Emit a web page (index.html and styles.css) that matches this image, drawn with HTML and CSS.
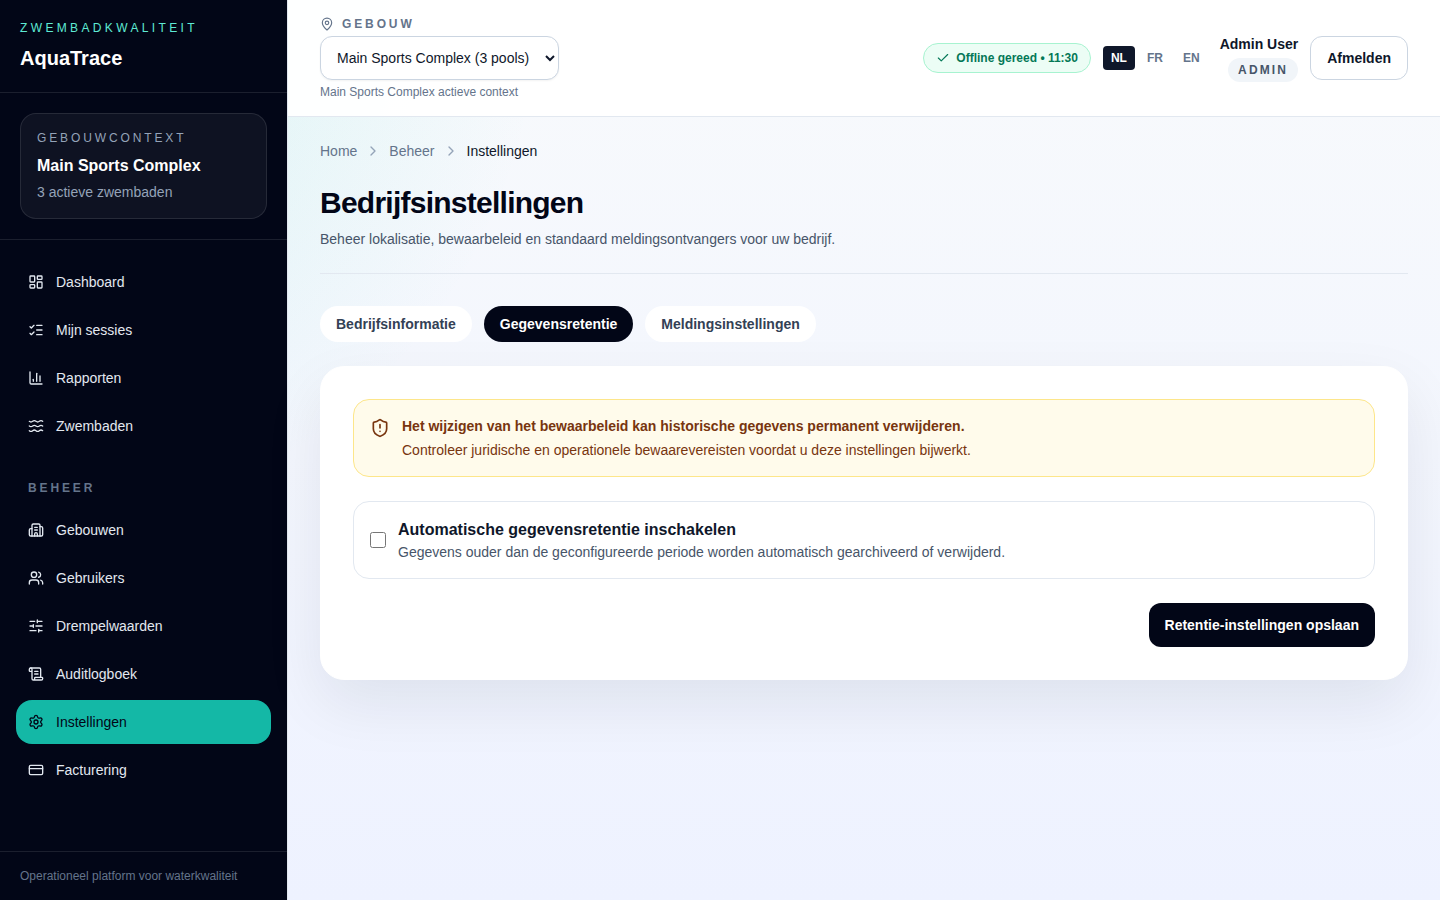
FILE: index.html
```html
<!DOCTYPE html>
<html lang="nl">
<head>
    <meta charset="utf-8">
    <meta name="viewport" content="width=device-width, initial-scale=1">
    <title>Bedrijfsinstellingen - AquaTrace</title>
    <link rel="stylesheet" href="styles.css">
</head>
<body>
<div class="app">
    <aside class="sidebar">
        <div class="brand">
            <p class="brand-label">Zwembadkwaliteit</p>
            <p class="brand-name">AquaTrace</p>
        </div>
        <div class="context">
            <div class="context-card">
                <p class="context-label">Gebouwcontext</p>
                <p class="context-name">Main Sports Complex</p>
                <p class="context-info">3 actieve zwembaden</p>
            </div>
        </div>
        <nav class="nav">
            <div class="nav-group">
                <a class="nav-link" href="#">
                    <svg class="icon" viewBox="0 0 24 24"><rect width="7" height="9" x="3" y="3" rx="1"/><rect width="7" height="5" x="14" y="3" rx="1"/><rect width="7" height="9" x="14" y="12" rx="1"/><rect width="7" height="5" x="3" y="16" rx="1"/></svg>
                    Dashboard
                </a>
                <a class="nav-link" href="#">
                    <svg class="icon" viewBox="0 0 24 24"><path d="M13 5h8"/><path d="M13 12h8"/><path d="M13 19h8"/><path d="m3 17 2 2 4-4"/><path d="m3 7 2 2 4-4"/></svg>
                    Mijn sessies
                </a>
                <a class="nav-link" href="#">
                    <svg class="icon" viewBox="0 0 24 24"><path d="M3 3v16a2 2 0 0 0 2 2h16"/><path d="M18 17V9"/><path d="M13 17V5"/><path d="M8 17v-3"/></svg>
                    Rapporten
                </a>
                <a class="nav-link" href="#">
                    <svg class="icon" viewBox="0 0 24 24"><path d="M2 12q2.5 2 5 0t5 0 5 0 5 0"/><path d="M2 19q2.5 2 5 0t5 0 5 0 5 0"/><path d="M2 5q2.5 2 5 0t5 0 5 0 5 0"/></svg>
                    Zwembaden
                </a>
            </div>
            <div class="nav-group">
                <p class="nav-title">Beheer</p>
                <a class="nav-link" href="#">
                    <svg class="icon" viewBox="0 0 24 24"><path d="M10 12h4"/><path d="M10 8h4"/><path d="M14 21v-3a2 2 0 0 0-4 0v3"/><path d="M6 10H4a2 2 0 0 0-2 2v7a2 2 0 0 0 2 2h16a2 2 0 0 0 2-2V9a2 2 0 0 0-2-2h-2"/><path d="M6 21V5a2 2 0 0 1 2-2h8a2 2 0 0 1 2 2v16"/></svg>
                    Gebouwen
                </a>
                <a class="nav-link" href="#">
                    <svg class="icon" viewBox="0 0 24 24"><path d="M16 21v-2a4 4 0 0 0-4-4H6a4 4 0 0 0-4 4v2"/><path d="M16 3.128a4 4 0 0 1 0 7.744"/><path d="M22 21v-2a4 4 0 0 0-3-3.870"/><circle cx="9" cy="7" r="4"/></svg>
                    Gebruikers
                </a>
                <a class="nav-link" href="#">
                    <svg class="icon" viewBox="0 0 24 24"><path d="M10 5H3"/><path d="M12 19H3"/><path d="M14 3v4"/><path d="M16 17v4"/><path d="M21 12h-9"/><path d="M21 19h-5"/><path d="M21 5h-7"/><path d="M8 10v4"/><path d="M8 12H3"/></svg>
                    Drempelwaarden
                </a>
                <a class="nav-link" href="#">
                    <svg class="icon" viewBox="0 0 24 24"><path d="M15 12h-5"/><path d="M15 8h-5"/><path d="M19 17V5a2 2 0 0 0-2-2H4"/><path d="M8 21h12a2 2 0 0 0 2-2v-1a1 1 0 0 0-1-1H11a1 1 0 0 0-1 1v1a2 2 0 1 1-4 0V5a2 2 0 1 0-4 0v2a1 1 0 0 0 1 1h3"/></svg>
                    Auditlogboek
                </a>
                <a class="nav-link active" href="#" aria-current="page">
                    <svg class="icon" viewBox="0 0 24 24"><path d="M9.671 4.136a2.340 2.340 0 0 1 4.659 0 2.340 2.340 0 0 0 3.319 1.915 2.340 2.340 0 0 1 2.330 4.033 2.340 2.340 0 0 0 0 3.831 2.340 2.340 0 0 1-2.330 4.033 2.340 2.340 0 0 0-3.319 1.915 2.340 2.340 0 0 1-4.659 0 2.340 2.340 0 0 0-3.320-1.915 2.340 2.340 0 0 1-2.330-4.033 2.340 2.340 0 0 0 0-3.831A2.340 2.340 0 0 1 6.350 6.051a2.340 2.340 0 0 0 3.319-1.915"/><circle cx="12" cy="12" r="3"/></svg>
                    Instellingen
                </a>
                <a class="nav-link" href="#">
                    <svg class="icon" viewBox="0 0 24 24"><rect width="20" height="14" x="2" y="5" rx="2"/><path d="M2 10h20"/></svg>
                    Facturering
                </a>
            </div>
        </nav>
        <p class="sidebar-footer">Operationeel platform voor waterkwaliteit</p>
    </aside>

    <div class="content">
        <header class="topbar">
            <div class="building">
                <label class="building-label" for="building">
                    <svg class="icon icon-small" viewBox="0 0 24 24"><path d="M20 10c0 4.993-5.539 10.193-7.399 11.799a1 1 0 0 1-1.202 0C9.539 20.193 4 14.993 4 10a8 8 0 0 1 16 0"/><circle cx="12" cy="10" r="3"/></svg>
                    Gebouw
                </label>
                <select class="building-select" id="building">
                    <option>Main Sports Complex (3 pools)</option>
                </select>
                <p class="building-info">Main Sports Complex actieve context</p>
            </div>
            <div class="topbar-right">
                <div class="status">
                    <svg class="icon icon-small" viewBox="0 0 24 24"><path d="M20 6 9 17l-5-5"/></svg>
                    Offline gereed • 11:30
                </div>
                <div class="languages">
                    <button type="button" class="language active">NL</button>
                    <button type="button" class="language">FR</button>
                    <button type="button" class="language">EN</button>
                </div>
                <div class="user">
                    <span class="user-name">Admin User</span>
                    <span class="user-role">Admin</span>
                </div>
                <button type="button" class="button button-outline">Afmelden</button>
            </div>
        </header>

        <main class="main">
            <nav class="breadcrumb" aria-label="Breadcrumb">
                <a href="#">Home</a>
                <svg class="icon" viewBox="0 0 24 24"><path d="m9 18 6-6-6-6"/></svg>
                <a href="#">Beheer</a>
                <svg class="icon" viewBox="0 0 24 24"><path d="m9 18 6-6-6-6"/></svg>
                <span class="current">Instellingen</span>
            </nav>
            <div class="page-header">
                <h1>Bedrijfsinstellingen</h1>
                <p>Beheer lokalisatie, bewaarbeleid en standaard meldingsontvangers voor uw bedrijf.</p>
            </div>
            <div class="tabs">
                <button type="button" class="tab">Bedrijfsinformatie</button>
                <button type="button" class="tab active">Gegevensretentie</button>
                <button type="button" class="tab">Meldingsinstellingen</button>
            </div>
            <form class="card">
                <div class="alert">
                    <svg class="icon alert-icon" viewBox="0 0 24 24"><path d="M20 13c0 5-3.500 7.500-7.660 8.950a1 1 0 0 1-.67-.01C7.500 20.500 4 18 4 13V6a1 1 0 0 1 1-1c2 0 4.500-1.200 6.240-2.720a1.170 1.170 0 0 1 1.520 0C14.510 3.810 17 5 19 5a1 1 0 0 1 1 1z"/><path d="M12 8v4"/><path d="M12 16h.01"/></svg>
                    <div class="alert-text">
                        <strong>Het wijzigen van het bewaarbeleid kan historische gegevens permanent verwijderen.</strong>
                        <p>Controleer juridische en operationele bewaarevereisten voordat u deze instellingen bijwerkt.</p>
                    </div>
                </div>
                <label class="option" for="retention">
                    <input type="checkbox" id="retention">
                    <span class="option-text">
                        <span class="option-title">Automatische gegevensretentie inschakelen</span>
                        <span class="option-info">Gegevens ouder dan de geconfigureerde periode worden automatisch gearchiveerd of verwijderd.</span>
                    </span>
                </label>
                <div class="actions">
                    <button type="submit" class="button button-dark">Retentie-instellingen opslaan</button>
                </div>
            </form>
        </main>
    </div>
</div>
</body>
</html>
```

FILE: styles.css
```css
* {
    box-sizing: border-box;
}
body {
    margin: 0;
    font-family: "Liberation Sans", Arial, sans-serif;
    font-size: 14px;
    line-height: 20px;
    color: #0f172a;
    background: radial-gradient(circle at top left, rgba(45, 212, 191, 0.18), transparent 32%),
                linear-gradient(180deg, #f8fafc 0%, #eef2ff 100%);
}
p, h1 {
    margin: 0;
}
a {
    color: inherit;
    text-decoration: none;
}
button, select, input {
    font: inherit;
}
button {
    border: none;
    cursor: pointer;
}
.icon {
    width: 16px;
    height: 16px;
    flex-shrink: 0;
    fill: none;
    stroke: currentColor;
    stroke-width: 2;
    stroke-linecap: round;
    stroke-linejoin: round;
}
.icon-small {
    width: 14px;
    height: 14px;
}
.app {
    display: flex;
    min-height: 100vh;
}

/* Sidebar */
.sidebar {
    display: flex;
    flex-direction: column;
    flex-shrink: 0;
    width: 288px;
    border-right: 1px solid #e2e8f0;
    background-color: #020617;
    color: #e2e8f0;
}
.brand {
    padding: 20px;
    border-bottom: 1px solid rgba(255, 255, 255, 0.1);
}
.brand-label {
    font-size: 12px;
    line-height: 16px;
    letter-spacing: 0.28em;
    text-transform: uppercase;
    color: #5eead4;
}
.brand-name {
    margin-top: 8px;
    font-size: 20px;
    line-height: 28px;
    font-weight: bold;
    color: #fff;
}
.context {
    padding: 20px;
    border-bottom: 1px solid rgba(255, 255, 255, 0.1);
}
.context-card {
    padding: 16px;
    border: 1px solid rgba(255, 255, 255, 0.1);
    border-radius: 16px;
    background-color: rgba(255, 255, 255, 0.05);
}
.context-label {
    font-size: 12px;
    line-height: 16px;
    letter-spacing: 0.24em;
    text-transform: uppercase;
    color: #94a3b8;
}
.context-name {
    margin-top: 8px;
    font-size: 16px;
    line-height: 24px;
    font-weight: bold;
    color: #fff;
}
.context-info {
    margin-top: 4px;
    color: #94a3b8;
}
.nav {
    display: flex;
    flex-direction: column;
    flex-grow: 1;
    gap: 32px;
    padding: 20px 16px;
}
.nav-group {
    display: flex;
    flex-direction: column;
    gap: 4px;
}
.nav-title {
    padding: 0 12px 8px;
    font-size: 12px;
    line-height: 16px;
    font-weight: bold;
    letter-spacing: 0.24em;
    text-transform: uppercase;
    color: #64748b;
}
.nav-link {
    display: flex;
    align-items: center;
    gap: 12px;
    padding: 12px;
    border-radius: 16px;
}
.nav-link:hover {
    background-color: rgba(255, 255, 255, 0.1);
}
.nav-link.active {
    background-color: #14b8a6;
    color: #020617;
}
.sidebar-footer {
    padding: 16px 20px;
    border-top: 1px solid rgba(255, 255, 255, 0.1);
    font-size: 12px;
    line-height: 16px;
    color: #64748b;
}

/* Top bar */
.content {
    flex-grow: 1;
    min-width: 0;
}
.topbar {
    display: flex;
    align-items: center;
    justify-content: space-between;
    padding: 16px 32px;
    border-bottom: 1px solid #e2e8f0;
    background-color: rgba(255, 255, 255, 0.95);
}
.building {
    display: flex;
    flex-direction: column;
    align-items: flex-start;
    gap: 4px;
    font-size: 12px;
    line-height: 16px;
    color: #64748b;
}
.building-label {
    display: flex;
    align-items: center;
    gap: 8px;
    font-weight: bold;
    letter-spacing: 0.24em;
    text-transform: uppercase;
}
.building-select {
    height: 44px;
    padding: 0 12px;
    border: 1px solid #cbd5e1;
    border-radius: 12px;
    background-color: #fff;
    box-shadow: 0 1px 2px rgba(0, 0, 0, 0.05);
    font-size: 14px;
    color: #0f172a;
}
.topbar-right {
    display: flex;
    align-items: center;
    gap: 12px;
}
.status {
    display: flex;
    align-items: center;
    gap: 6px;
    padding: 6px 12px;
    border: 1px solid #a7f3d0;
    border-radius: 16px;
    background-color: #ecfdf5;
    font-size: 12px;
    line-height: 16px;
    font-weight: bold;
    color: #047857;
}
.languages {
    display: flex;
    gap: 4px;
}
.language {
    padding: 4px 8px;
    border-radius: 4px;
    background-color: transparent;
    font-size: 12px;
    line-height: 16px;
    font-weight: bold;
    color: #64748b;
}
.language.active {
    background-color: #0f172a;
    color: #fff;
}
.user {
    display: flex;
    flex-direction: column;
    align-items: flex-end;
    gap: 4px;
}
.user-name {
    font-weight: bold;
}
.user-role {
    padding: 4px 10px;
    border-radius: 12px;
    background-color: #f1f5f9;
    font-size: 12px;
    line-height: 16px;
    font-weight: bold;
    letter-spacing: 0.18em;
    text-transform: uppercase;
    color: #475569;
}
.button {
    height: 44px;
    padding: 0 16px;
    border-radius: 12px;
    font-weight: bold;
}
.button-outline {
    border: 1px solid #cbd5e1;
    background-color: #fff;
    color: #0f172a;
}
.button-dark {
    background-color: #020617;
    color: #fff;
}

/* Page */
.main {
    padding: 24px 32px;
}
.breadcrumb {
    display: flex;
    align-items: center;
    gap: 8px;
    color: #64748b;
}
.breadcrumb .icon {
    color: #94a3b8;
}
.breadcrumb .current {
    color: #0f172a;
}
.page-header {
    margin-top: 24px;
    padding-bottom: 24px;
    border-bottom: 1px solid #e2e8f0;
}
.page-header h1 {
    font-size: 30px;
    line-height: 36px;
    letter-spacing: -0.025em;
    color: #020617;
}
.page-header p {
    margin-top: 8px;
    color: #475569;
}
.tabs {
    display: flex;
    gap: 12px;
    margin-top: 32px;
}
.tab {
    padding: 8px 16px;
    border-radius: 18px;
    background-color: #fff;
    font-weight: bold;
    color: #334155;
}
.tab.active {
    background-color: #020617;
    color: #fff;
}
.card {
    display: flex;
    flex-direction: column;
    gap: 24px;
    margin-top: 24px;
    padding: 32px;
    border: 1px solid #fff;
    border-radius: 24px;
    background-color: #fff;
    box-shadow: 0 24px 60px rgba(15, 23, 42, 0.08);
}
.alert {
    display: flex;
    gap: 12px;
    padding: 16px;
    border: 1px solid #fde68a;
    border-radius: 16px;
    background-color: #fffbeb;
    color: #78350f;
}
.alert-icon {
    width: 20px;
    height: 20px;
    margin-top: 2px;
}
.alert-text {
    display: flex;
    flex-direction: column;
    gap: 4px;
}
.option {
    display: flex;
    align-items: center;
    gap: 12px;
    padding: 16px;
    border: 1px solid #e2e8f0;
    border-radius: 16px;
}
.option input {
    width: 16px;
    height: 16px;
    margin: 0;
}
.option-text {
    display: flex;
    flex-direction: column;
}
.option-title {
    font-size: 16px;
    line-height: 24px;
    font-weight: bold;
}
.option-info {
    color: #475569;
}
.actions {
    display: flex;
    justify-content: flex-end;
}
```
